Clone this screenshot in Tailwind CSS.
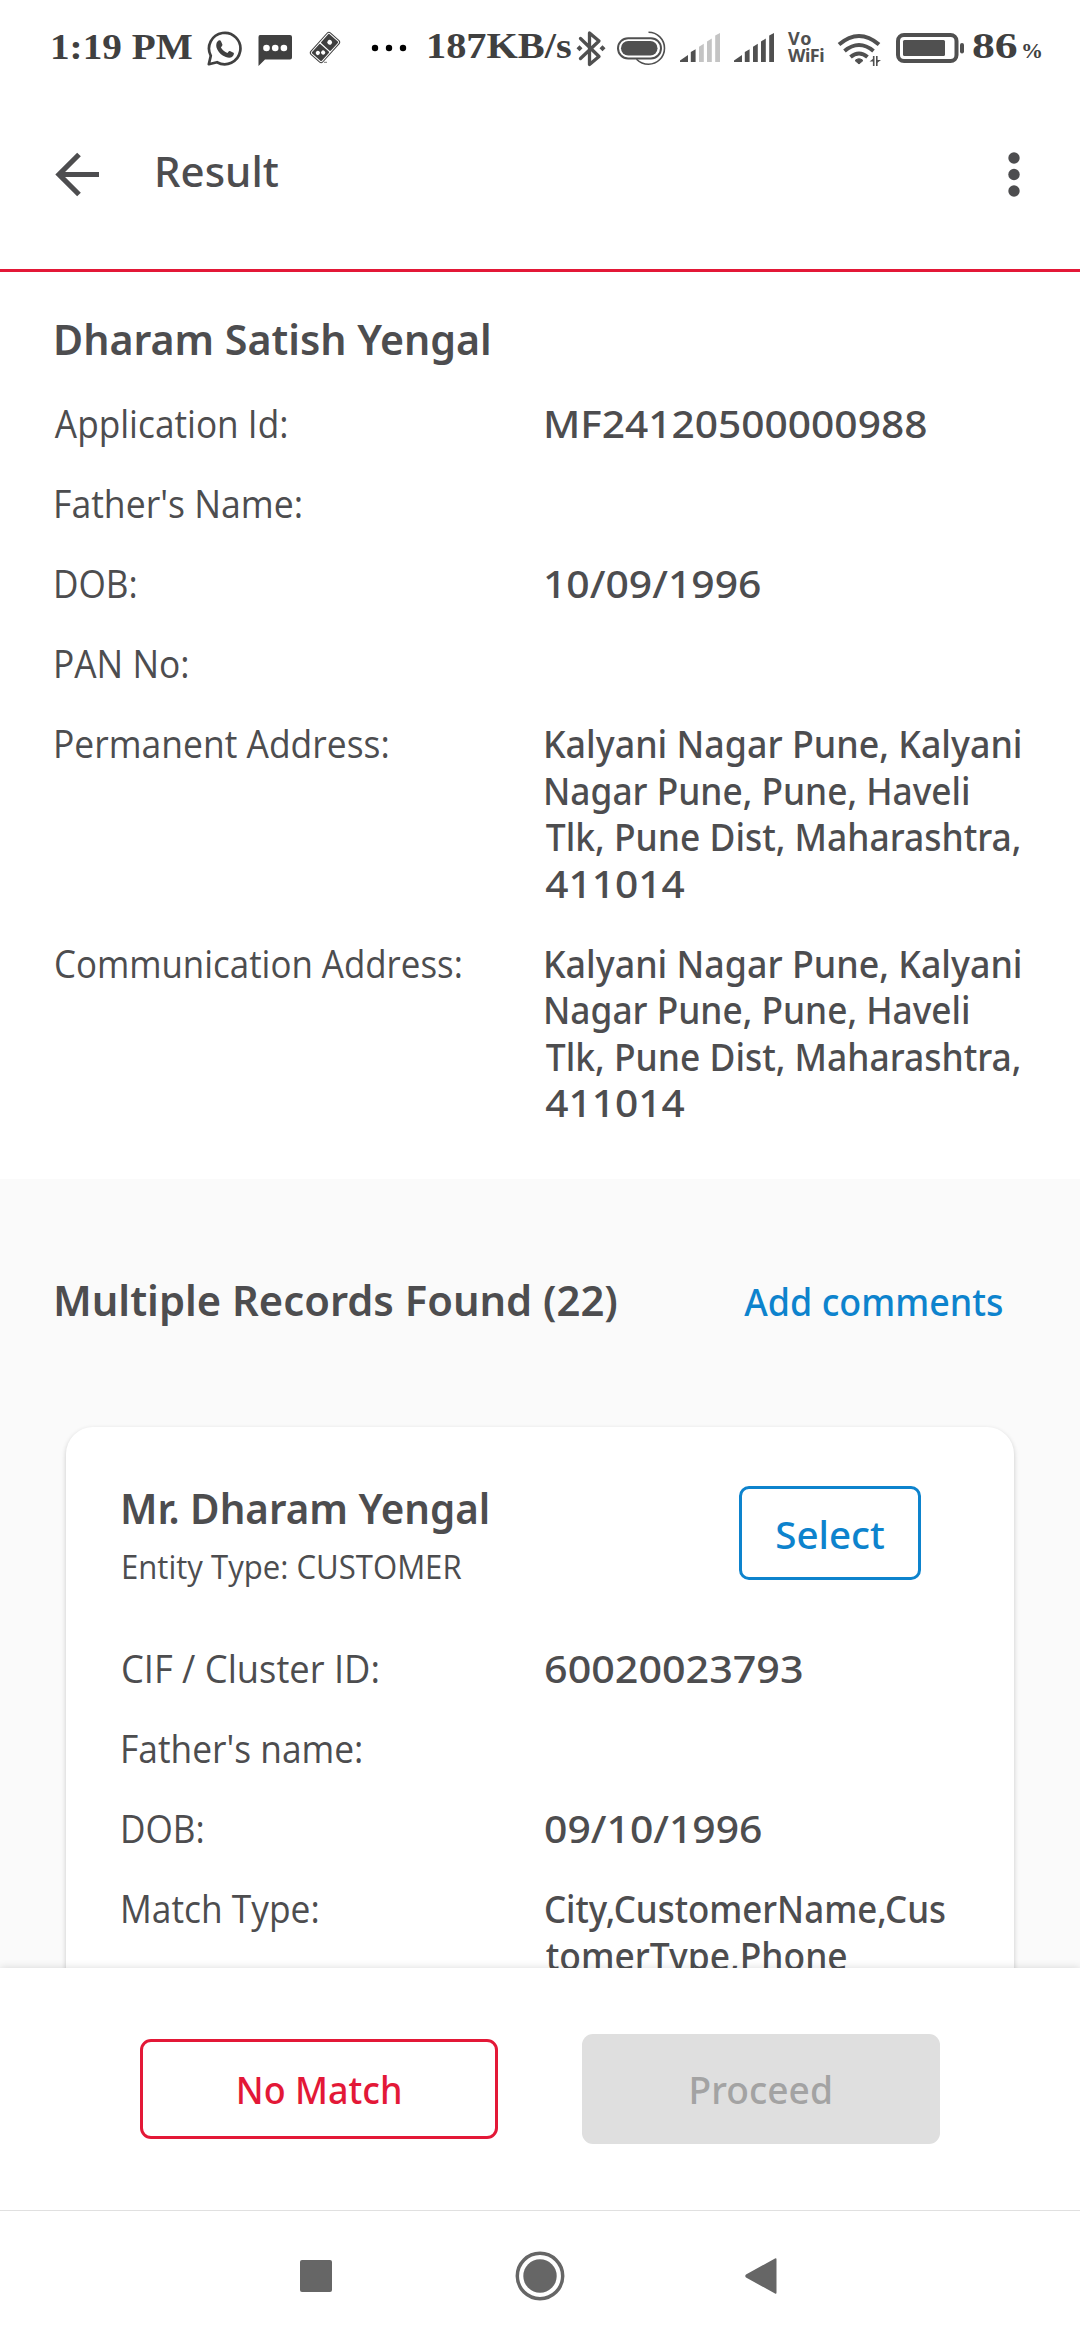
<!DOCTYPE html>
<html lang="en">
<head>
<meta charset="utf-8">
<title>Result</title>
<script src="https://cdn.jsdelivr.net/npm/@tailwindcss/browser@4"></script>
</head>
<body class="bg-white">
<div class="flex h-[2340px] w-[1080px] flex-col overflow-hidden bg-white font-['Noto_Sans',sans-serif] text-[#4d4d4f]">

  <!-- Status bar -->
  <div class="flex h-[100px] shrink-0 items-start pt-7 pl-[50px] font-['Liberation_Serif',serif] text-[36px] leading-[36px] font-bold text-[#404040]">
    <div class="w-[157px] pt-px"><span class="inline-block origin-left scale-x-[1.09] whitespace-nowrap">1:19 PM</span></div>
    <svg class="h-10 w-9 shrink-0" viewBox="207 28 36 40" fill="none" stroke="#404040">
      <path d="M208.8 64.2l2-8.4A15.7 15.7 0 1 1 217 62.200z" stroke-width="2.7" stroke-linejoin="round"/>
      <path d="M217.500 41.500c1.500-1.700 3-1.400 3.600 0l1.300 3.100c.3.800-.9 2.100-1.500 2.800 1.500 2.700 3.700 4.400 6.500 5.600.8-.9 1.500-2.400 2.500-2l3.600 1.800c1.100.6-.2 3.300-1.500 4.200-2.500 1.500-6.500.3-9.300-1.500-2.800-1.900-5.300-4.900-6.200-8-.6-2.500-.1-4.800 1-6z" fill="#404040" stroke="none"/>
    </svg>
    <svg class="ml-[15px] h-10 w-[34px] shrink-0" viewBox="258 28 34 40">
      <path d="M260 35h30q2 0 2 2v20.500q0 2-2 2h-25l-6.500 6.500V37q0-2 1.500-2z" fill="#404040"/>
      <g fill="#fff"><circle cx="266.500" cy="48" r="3.300"/><circle cx="275.200" cy="48" r="3.300"/><circle cx="283.900" cy="48" r="3.300"/></g>
    </svg>
    <svg class="ml-4 h-10 w-[35px] shrink-0" viewBox="308 28 35 40">
      <g transform="rotate(-48 325 47.500)">
        <rect x="310.500" y="39.500" width="29" height="16" rx="2.500" fill="#fff" stroke="#404040" stroke-width="1"/>
        <rect x="312" y="41" width="12.500" height="13" rx="1" fill="#404040"/>
        <rect x="325.700" y="41" width="12.300" height="13" rx="1" fill="#404040"/>
        <circle cx="332" cy="47.500" r="2.400" fill="#fff"/>
        <circle cx="316.200" cy="45.800" r="2.100" fill="#fff"/><circle cx="320" cy="49.500" r="2.100" fill="#fff"/>
      </g>
      <path d="M324 62.300h3" stroke="#777" stroke-width="1"/>
    </svg>
    <svg class="ml-7 h-10 w-[38px] shrink-0" viewBox="371 28 38 40" fill="#000">
      <circle cx="375" cy="48" r="3.200"/><circle cx="389" cy="48" r="3.200"/><circle cx="403" cy="48" r="3.200"/>
    </svg>
    <div class="ml-[17px] w-[148px]"><span class="inline-block origin-left scale-x-[1.12] whitespace-nowrap">187KB/s</span></div>
    <svg class="h-10 w-[34px] shrink-0" viewBox="574 28 34 40" fill="none" stroke="#505050" stroke-width="3.300">
      <path d="M580.500 38.500l18.500 18-9.500 8V33l9.500 8-18.500 17.500" stroke-linejoin="round" stroke-linecap="round"/>
      <path d="M579.500 45.200l3 3-3 3-3-3zM602.500 45.200l3 3-3 3-3-3z" fill="#505050" stroke="none"/>
    </svg>
    <svg class="ml-2 h-10 w-[52px] shrink-0" viewBox="616 28 52 40" fill="none" stroke="#505050">
      <path d="M648.500 32.200a16 16 0 0 1 0 32c-5 0-9-2-12-5" stroke-width="1.600"/>
      <rect x="618" y="38.200" width="43" height="20.200" rx="10.100" stroke-width="2" fill="#fff"/>
      <rect x="621" y="41" width="36.500" height="14.500" rx="7.200" fill="#505050" stroke="none"/>
    </svg>
    <svg class="ml-3 h-10 w-[41px] shrink-0" viewBox="680 28 41 40" fill="#505050">
      <path d="M680 60.500l8-5.500v7h-8zM690.800 52l4.800-2.800V62h-4.800z"/>
      <path d="M699 46.700l4.800-3V62H699zM707 41.500l4.800-3V62H707zM715.200 35.500l4.800-2.500V62h-4.800z" fill="#c4c4c4"/>
    </svg>
    <svg class="ml-[13px] h-10 w-[41px] shrink-0" viewBox="734 28 41 40" fill="#505050">
      <path d="M734 60.500l8-5.500v7h-8zM744.800 52l4.800-2.800V62h-4.800zM753 46.700l4.800-3V62H753zM761 41.500l4.800-3V62H761zM769.200 35.500l4.800-2.500V62h-4.800z"/>
    </svg>
    <div class="ml-[13px] w-[37px] pt-[2px] font-['Noto_Sans',sans-serif] text-[18px] leading-[17px] font-bold text-[#505050]">
      <div class="tracking-[1px]">Vo</div><div class="tracking-[-0.500px]">WiFi</div>
    </div>
    <svg class="ml-3 h-10 w-[44px] shrink-0" viewBox="837 28 44 40" fill="none" stroke="#505050" stroke-width="4">
      <path d="M839 44.500q20-17 40 0M844.500 51q14.500-12 29 0M850.500 57q8.500-7 17 0"/>
      <path d="M855 60.500q4-3.500 8 0l-4 3.500z" fill="#505050" stroke-width="1"/>
      <path d="M873.700 56v10M876.800 56v10" stroke-width="1.600"/><path d="M869.500 61.500h4v-3zM881 60h-4v3z" fill="#505050" stroke="none"/>
    </svg>
    <svg class="ml-[15px] h-10 w-[70px] shrink-0" viewBox="896 28 70 40" fill="none" stroke="#505050">
      <rect x="898" y="35" width="58.500" height="26" rx="6" stroke-width="4"/>
      <rect x="903" y="40" width="42" height="16" rx="1.500" fill="#505050" stroke="none"/>
      <rect x="960" y="43" width="4" height="10.500" rx="2" fill="#505050" stroke="none"/>
    </svg>
    <div class="ml-[6px] w-[49px]"><span class="inline-block origin-left scale-x-[1.270]">86</span></div>
    <div class="pt-[8px] text-[22px] leading-[30px]">%</div>
  </div>

  <!-- App bar -->
  <header class="flex h-[172px] shrink-0 items-start border-b-[3px] border-[#e31837] pt-[46px] pl-[54px]">
    <svg class="mt-[5px] h-12 w-12 shrink-0" viewBox="54 151 48 48" fill="none" stroke="#4d4d4f" stroke-width="5.200">
      <path d="M99 174.500H58.500M79 154.500l-20 20 20 20"/>
    </svg>
    <h1 class="ml-[52px] text-[42px] leading-[50px] font-medium">Result</h1>
    <svg class="mt-[5px] mr-[56px] ml-auto h-12 w-5 shrink-0" viewBox="1004 151 20 48" fill="#4d4d4f">
      <circle cx="1014" cy="158" r="5.700"/><circle cx="1014" cy="174.500" r="5.700"/><circle cx="1014" cy="191" r="5.700"/>
    </svg>
  </header>

  <main class="h-[1696px] shrink-0 overflow-hidden">
    <!-- Applicant -->
    <section class="h-[907px] pl-[53px] pt-[42px]">
      <h2 class="origin-left scale-x-[0.98] text-[42px] leading-[50px] font-semibold">Dharam Satish Yengal</h2>
      <dl class="mt-9 grid grid-cols-[490px_max-content] gap-y-[33.400px] text-[38px] leading-[46.600px] whitespace-nowrap [&_dt]:origin-left [&_dt]:font-['Open_Sans',sans-serif] [&_dd]:origin-left [&_dd]:font-medium">
        <dt class="scale-x-[0.927] pl-[2px]">Application Id:</dt><dd class="scale-x-[1.070]">MF24120500000988</dd>
        <dt class="scale-x-[0.937]">Father's Name:</dt><dd></dd>
        <dt class="scale-x-[0.925]">DOB:</dt><dd class="scale-x-[1.075]">10/09/1996</dd>
        <dt class="scale-x-[0.930]">PAN No:</dt><dd></dd>
        <dt class="scale-x-[0.933]">Permanent Address:</dt>
        <dd class="[&>span]:block [&>span]:origin-left">
          <span class="scale-x-[0.942]">Kalyani Nagar Pune, Kalyani</span>
          <span class="scale-x-[0.928]">Nagar Pune, Pune, Haveli</span>
          <span class="scale-x-[0.932] pl-[3px]">Tlk, Pune Dist, Maharashtra,</span>
          <span class="scale-x-[1.070] pl-[2px]">411014</span>
        </dd>
        <dt class="scale-x-[0.918] pl-px">Communication Address:</dt>
        <dd class="[&>span]:block [&>span]:origin-left">
          <span class="scale-x-[0.942]">Kalyani Nagar Pune, Kalyani</span>
          <span class="scale-x-[0.928]">Nagar Pune, Pune, Haveli</span>
          <span class="scale-x-[0.932] pl-[3px]">Tlk, Pune Dist, Maharashtra,</span>
          <span class="scale-x-[1.070] pl-[2px]">411014</span>
        </dd>
      </dl>
    </section>

    <!-- Matching records -->
    <section class="bg-[#fafafa] pt-24">
      <div class="flex items-baseline justify-between pr-[77px] pl-[53px]">
        <h2 class="origin-left scale-x-[0.993] text-[42px] leading-[50px] font-semibold">Multiple Records Found (22)</h2>
        <a class="origin-right scale-x-[0.944] text-[38px] leading-[46px] font-medium text-[#0d83cd]">Add comments</a>
      </div>
      <article class="mx-[66px] mt-[102px] h-[700px] rounded-[27px] bg-white pt-14 pl-[54px] shadow-[0_2px_5px_rgba(0,0,0,0.2)]">
        <div class="flex">
          <div class="w-[619px] whitespace-nowrap">
            <h3 class="origin-left scale-x-[0.960] text-[42px] leading-[50px] font-semibold">Mr. Dharam Yengal</h3>
            <p class="mt-[14px] origin-left scale-x-[0.972] pl-px font-['Open_Sans',sans-serif] text-[32px] leading-10">Entity Type: CUSTOMER</p>
          </div>
          <button class="mt-[3px] h-[94px] w-[182px] rounded-[10px] border-[3px] border-[#0d83cd] pt-px text-[38px] leading-[46px] font-medium text-[#0d83cd]"><span class="inline-block scale-x-[1.015]">Select</span></button>
        </div>
        <dl class="mt-[58px] grid grid-cols-[423px_max-content] gap-y-[33.400px] text-[38px] leading-[46.600px] whitespace-nowrap [&_dt]:origin-left [&_dt]:font-['Open_Sans',sans-serif] [&_dd]:origin-left [&_dd]:font-medium">
          <dt class="scale-x-[0.955] pl-px">CIF / Cluster ID:</dt><dd class="scale-x-[1.085] pl-px">60020023793</dd>
          <dt class="scale-x-[0.930]">Father's name:</dt><dd></dd>
          <dt class="scale-x-[0.925]">DOB:</dt><dd class="scale-x-[1.075] pl-px">09/10/1996</dd>
          <dt class="scale-x-[0.930]">Match Type:</dt>
          <dd class="[&>span]:block [&>span]:origin-left">
            <span class="scale-x-[0.918] pl-px">City,CustomerName,Cus</span>
            <span class="scale-x-[0.932] pl-[3px]">tomerType,Phone</span>
          </dd>
        </dl>
      </article>
    </section>
  </main>

  <!-- Actions -->
  <footer class="relative flex h-[242px] shrink-0 items-center justify-center gap-[84px] bg-white text-[38px] leading-[46px] font-medium shadow-[0_0_8px_rgba(0,0,0,0.15)]">
    <button class="h-[100px] w-[358px] rounded-[11px] border-[3px] border-[#e31837] text-[#e31837]"><span class="inline-block scale-x-[0.945]">No Match</span></button>
    <button class="h-[110px] w-[358px] rounded-[11px] bg-[#dfdfdf] text-[#a3a3a3]"><span class="inline-block scale-x-[0.978]">Proceed</span></button>
  </footer>

  <!-- System navigation -->
  <nav class="relative flex h-[130px] shrink-0 items-center border-t border-[#e0e0e0] bg-white pl-[300px]">
    <svg class="h-[50px] w-8" viewBox="0 0 32 50"><rect y="9" width="32" height="32" rx="2" fill="#666"/></svg>
    <svg class="ml-[183px] h-[50px] w-[50px]" viewBox="0 0 50 50" fill="#666"><circle cx="25" cy="25" r="22.700" fill="none" stroke="#666" stroke-width="3.500"/><circle cx="25" cy="25" r="16.700"/></svg>
    <svg class="ml-[180px] h-[50px] w-8" viewBox="0 0 32 50"><path d="M30 7.500q1.500-1 1.500 1v33q0 2-1.500 1L1 26.500q-1.500-1.500 0-3z" fill="#666"/></svg>
  </nav>
</div>
</body>
</html>
